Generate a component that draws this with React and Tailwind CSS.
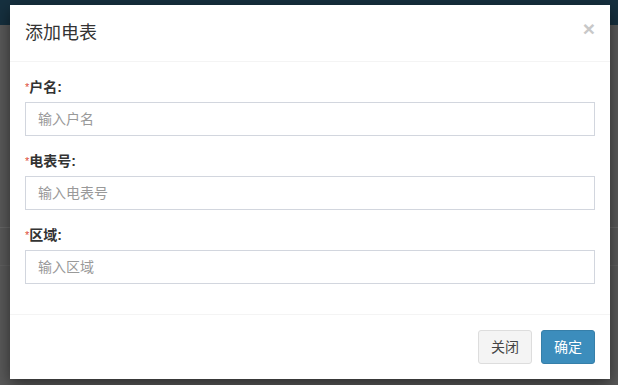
import React from 'react';

const font = { fontFamily: '"Helvetica Neue", "Liberation Sans", "Noto Sans CJK SC", sans-serif' };

const Field = ({ label, placeholder }) => (
    <div className="mb-[15px]">
        <label className="block mb-[5px] text-[14px] leading-[20px] font-bold text-[#333]">
            <span className="text-[#dd4b39] text-[11px] font-normal align-top">*</span>{label}:
        </label>
        <input
            type="text"
            placeholder={placeholder}
            className="block w-full h-[34px] px-3 border border-[#d2d6de] text-[14px] text-[#555] placeholder:text-[#999] outline-none bg-white"
        />
    </div>
);

const App = () => {
    return (
        <div className="relative w-[618px] h-[385px] overflow-hidden bg-[#595959]" style={font}>
            {/* page behind the overlay */}
            <div className="h-[25px] bg-[#16303f]" />
            <div className="mt-[202px] border-t border-[#666]" />
            <div className="mt-[37px] border-t border-[#606060]" />

            {/* modal */}
            <div className="absolute left-[10px] top-[5px] w-[600px] bg-white shadow-[0_5px_15px_rgba(0,0,0,0.5)]">
                <div className="flex items-center justify-between p-[15px] border-b border-[#f4f4f4]">
                    <h4 className="text-[18px] leading-[26px] font-normal text-[#333]">添加电表</h4>
                    <span className="text-[21px] leading-none font-bold text-[#c8c8c8] -mt-[10px]">×</span>
                </div>
                <div className="p-[15px]">
                    <Field label="户名" placeholder="输入户名" />
                    <Field label="电表号" placeholder="输入电表号" />
                    <Field label="区域" placeholder="输入区域" />
                </div>
                <div className="flex justify-end gap-[9px] p-[15px] border-t border-[#f4f4f4]">
                    <button className="h-[34px] px-3 text-[14px] text-[#444] bg-[#f4f4f4] border border-[#ddd] rounded-[3px]">关闭</button>
                    <button className="h-[34px] px-3 text-[14px] text-white bg-[#3c8dbc] border border-[#367fa9] rounded-[3px]">确定</button>
                </div>
            </div>
        </div>
    );
};

export default App;
